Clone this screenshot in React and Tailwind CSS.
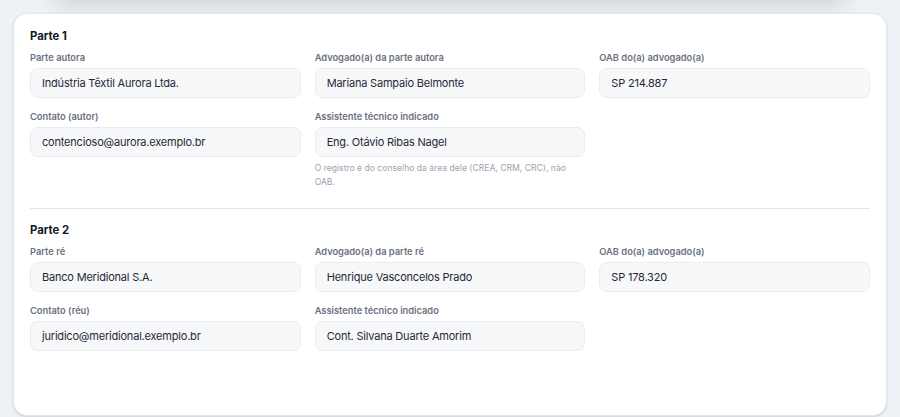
import React from "react";

const Field = ({ label, value, hint }) => (
    <div className="flex flex-col">
        <label className="text-[9.3px] leading-[14px] font-semibold text-[#6b7280] mb-[3px]">{label}</label>
        <div className="h-[30px] flex items-center rounded-lg border border-[#e9ebef] bg-[#f7f8fa] pl-[11px] text-[11px] tracking-[-0.2px] text-[#1f2937]">
            {value}
        </div>
        {hint && (
            <p className="mt-1 text-[8.6px] leading-[14px] text-[#9ca3af]">{hint}</p>
        )}
    </div>
);

const Section = ({ title, fields }) => (
    <div>
        <h3 className="text-[11.3px] leading-4 font-bold text-[#111827]">{title}</h3>
        <div className="mt-[7px] grid grid-cols-3 gap-x-[14px] gap-y-3 items-start">
            {fields.map((f, i) => (f ? <Field key={i} {...f} /> : <div key={i} />))}
        </div>
    </div>
);

const parte1 = [
    { label: "Parte autora", value: "Indústria Têxtil Aurora Ltda." },
    { label: "Advogado(a) da parte autora", value: "Mariana Sampaio Belmonte" },
    { label: "OAB do(a) advogado(a)", value: "SP 214.887" },
    { label: "Contato (autor)", value: "contencioso@aurora.exemplo.br" },
    {
        label: "Assistente técnico indicado",
        value: "Eng. Otávio Ribas Nagel",
        hint: "O registro é do conselho da área dele (CREA, CRM, CRC), não OAB.",
    },
    null,
];

const parte2 = [
    { label: "Parte ré", value: "Banco Meridional S.A." },
    { label: "Advogado(a) da parte ré", value: "Henrique Vasconcelos Prado" },
    { label: "OAB do(a) advogado(a)", value: "SP 178.320" },
    { label: "Contato (réu)", value: "juridico@meridional.exemplo.br" },
    { label: "Assistente técnico indicado", value: "Cont. Silvana Duarte Amorim" },
    null,
];

export default function App() {
    return (
        <div className="min-h-screen bg-[#eef1f5] px-[13px] pt-[13px] overflow-hidden font-['Inter',sans-serif]">
            {/* bottom of the card above, only its shadow shows */}
            <div className="-mt-[73px] mb-[13px] mx-[40px] h-[60px] rounded-2xl bg-[#eef1f5] shadow-[0_4px_22px_rgba(30,41,70,0.17)]" />
            <div className="h-[403px] rounded-[14px] border border-[#e4e7ec] bg-white px-4 pt-[14px] shadow-sm">
                <Section title="Parte 1" fields={parte1} />
                <div className="mt-[19px] mb-[13px] h-px bg-[#e5e7eb]" />
                <Section title="Parte 2" fields={parte2} />
            </div>
        </div>
    );
}
